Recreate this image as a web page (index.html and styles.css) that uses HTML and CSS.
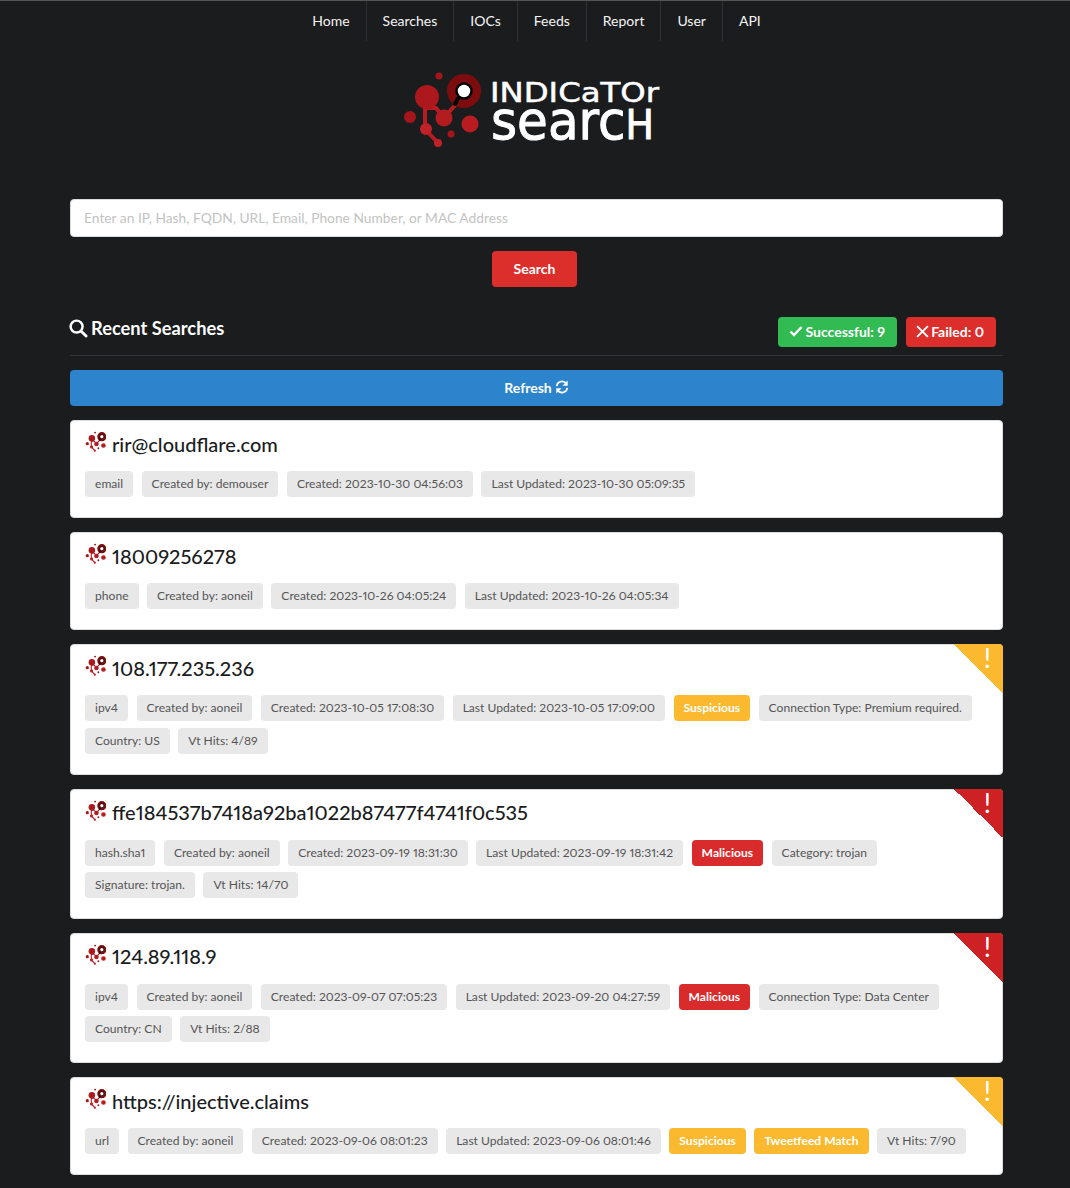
FILE: index.html
```html
<!DOCTYPE html>
<html lang="en">
<head>
<meta charset="utf-8">
<title>Indicator Search</title>
<link rel="stylesheet" href="styles.css">
</head>
<body>
<svg class="defs" width="0" height="0" aria-hidden="true">
  <defs>
    <g id="mark">
      <g fill="none" stroke="#b81c20" stroke-linecap="round" stroke-linejoin="round">
        <path d="M425 100V129L438 143" stroke-width="4"/>
        <path d="M427 108H436L444 118L456 104" stroke-width="4"/>
      </g>
      <circle cx="439" cy="76" r="3.5" fill="#a5161b"/>
      <circle cx="427" cy="97" r="12" fill="#ad181c"/>
      <circle cx="410" cy="117" r="6" fill="#a5161b"/>
      <circle cx="444" cy="118" r="8.500" fill="#b41c20"/>
      <circle cx="470" cy="124" r="8.500" fill="#b81c20"/>
      <circle cx="426" cy="129" r="6" fill="#c0222a"/>
      <circle cx="438" cy="143" r="4" fill="#c0222a"/>
      <circle cx="451" cy="134" r="3.500" fill="#a5161b"/>
      <circle cx="464" cy="91" r="17" fill="#7d0c0e"/>
      <path d="M459 97L455 104" stroke="#000" stroke-width="4" stroke-linecap="round"/>
      <circle cx="464" cy="91" r="7.500" fill="#fff" stroke="#000" stroke-width="2.500"/>
    </g>
  </defs>
</svg>

<nav class="nav">
  <a class="nav-item" href="#">Home</a>
  <a class="nav-item" href="#">Searches</a>
  <a class="nav-item" href="#">IOCs</a>
  <a class="nav-item" href="#">Feeds</a>
  <a class="nav-item" href="#">Report</a>
  <a class="nav-item" href="#">User</a>
  <a class="nav-item" href="#">API</a>
</nav>

<header class="brand">
  <svg class="logo" viewBox="404 68 265 84" width="265" height="84" role="img" aria-label="Indicator Search">
    <use href="#mark"/>
    <text class="logo-top" x="490" y="102" textLength="169" lengthAdjust="spacingAndGlyphs">INDICaTOr</text>
    <text class="logo-bottom" x="491" y="139" textLength="163" lengthAdjust="spacingAndGlyphs">searc<tspan class="logo-cap">H</tspan></text>
  </svg>
</header>

<main class="container">
  <form class="search">
    <input class="search-input" type="text" placeholder="Enter an IP, Hash, FQDN, URL, Email, Phone Number, or MAC Address">
    <button class="btn btn-search" type="button">Search</button>
  </form>

  <section class="recent-head">
    <h2 class="recent-title">
      <svg class="ico-search" viewBox="0 0 20 20" width="19" height="19"><circle cx="8" cy="8" r="6.300" fill="none" stroke="#fff" stroke-width="2.600"/><path d="M12.800 12.800L18 18" stroke="#fff" stroke-width="3" stroke-linecap="round"/></svg>
      Recent Searches
    </h2>
    <div class="counts">
      <span class="count count-ok"><svg viewBox="0 0 14 12" width="14" height="12"><path d="M1.500 6.500L5 10L12.500 2" fill="none" stroke="#fff" stroke-width="2.400"/></svg>Successful: 9</span>
      <span class="count count-bad"><svg viewBox="0 0 12 12" width="13" height="13"><path d="M1 1L11 11M11 1L1 11" fill="none" stroke="#fff" stroke-width="1.800"/></svg>Failed: 0</span>
    </div>
  </section>

  <button class="btn btn-refresh" type="button">Refresh
    <svg viewBox="0 0 16 16" width="14" height="14"><g fill="none" stroke="#fff" stroke-width="2"><path d="M2 7A6 6 0 0 1 13 4.500"/><path d="M14 9A6 6 0 0 1 3 11.500"/></g><path d="M14.500 0.500V6.500H8.500Z M1.500 15.500V9.500H7.500Z" fill="#fff"/></svg>
  </button>

  <div class="results">
    <article class="card">
      <h3 class="card-title"><svg class="mark" viewBox="402 70 77 78" width="21" height="21"><use href="#mark"/></svg>rir@cloudflare.com</h3>
      <div class="tags">
        <span class="tag">email</span><span class="tag">Created by: demouser</span><span class="tag">Created: 2023-10-30 04:56:03</span><span class="tag">Last Updated: 2023-10-30 05:09:35</span>
      </div>
    </article>

    <article class="card">
      <h3 class="card-title"><svg class="mark" viewBox="402 70 77 78" width="21" height="21"><use href="#mark"/></svg>18009256278</h3>
      <div class="tags">
        <span class="tag">phone</span><span class="tag">Created by: aoneil</span><span class="tag">Created: 2023-10-26 04:05:24</span><span class="tag">Last Updated: 2023-10-26 04:05:34</span>
      </div>
    </article>

    <article class="card">
      <span class="corner corner-warn">!</span>
      <h3 class="card-title"><svg class="mark" viewBox="402 70 77 78" width="21" height="21"><use href="#mark"/></svg>108.177.235.236</h3>
      <div class="tags">
        <span class="tag">ipv4</span><span class="tag">Created by: aoneil</span><span class="tag">Created: 2023-10-05 17:08:30</span><span class="tag">Last Updated: 2023-10-05 17:09:00</span><span class="tag tag-warn">Suspicious</span><span class="tag">Connection Type: Premium required.</span><span class="tag">Country: US</span><span class="tag">Vt Hits: 4/89</span>
      </div>
    </article>

    <article class="card">
      <span class="corner corner-bad">!</span>
      <h3 class="card-title"><svg class="mark" viewBox="402 70 77 78" width="21" height="21"><use href="#mark"/></svg>ffe184537b7418a92ba1022b87477f4741f0c535</h3>
      <div class="tags">
        <span class="tag">hash.sha1</span><span class="tag">Created by: aoneil</span><span class="tag">Created: 2023-09-19 18:31:30</span><span class="tag">Last Updated: 2023-09-19 18:31:42</span><span class="tag tag-bad">Malicious</span><span class="tag">Category: trojan</span><span class="tag">Signature: trojan.</span><span class="tag">Vt Hits: 14/70</span>
      </div>
    </article>

    <article class="card">
      <span class="corner corner-bad">!</span>
      <h3 class="card-title"><svg class="mark" viewBox="402 70 77 78" width="21" height="21"><use href="#mark"/></svg>124.89.118.9</h3>
      <div class="tags">
        <span class="tag">ipv4</span><span class="tag">Created by: aoneil</span><span class="tag">Created: 2023-09-07 07:05:23</span><span class="tag">Last Updated: 2023-09-20 04:27:59</span><span class="tag tag-bad">Malicious</span><span class="tag">Connection Type: Data Center</span><span class="tag">Country: CN</span><span class="tag">Vt Hits: 2/88</span>
      </div>
    </article>

    <article class="card">
      <span class="corner corner-warn">!</span>
      <h3 class="card-title"><svg class="mark" viewBox="402 70 77 78" width="21" height="21"><use href="#mark"/></svg>https://injective.claims</h3>
      <div class="tags">
        <span class="tag">url</span><span class="tag">Created by: aoneil</span><span class="tag">Created: 2023-09-06 08:01:23</span><span class="tag">Last Updated: 2023-09-06 08:01:46</span><span class="tag tag-warn">Suspicious</span><span class="tag tag-warn">Tweetfeed Match</span><span class="tag">Vt Hits: 7/90</span>
      </div>
    </article>
  </div>
</main>
</body>
</html>
```
FILE: styles.css
```css
* { box-sizing: border-box; }
html, body { margin: 0; padding: 0; }
body {
  background: #1b1c1e;
  border-top: 1px solid #555;
  font-family: Lato, "Open Sans", sans-serif;
  font-variant-numeric: proportional-nums;
  color: #f5f5f5;
  padding: 0 67px 12px 70px;
}
.defs { position: absolute; }

.nav { display: flex; justify-content: center; height: 40px; }
.nav-item {
  display: flex;
  align-items: center;
  padding: 0 16px 1px;
  color: #f5f5f5;
  font-size: 14px;
  text-decoration: none;
  border-left: 1px solid #303134;
}
.nav-item:first-child { border-left: 0; }

.brand { display: flex; justify-content: center; padding-top: 27px; height: 158px; }
.logo { display: block; }
.logo-top { font: 400 27px "DejaVu Sans", sans-serif; fill: #fff; stroke: #fff; stroke-width: 0.5px; }
.logo-bottom { font: 400 53px "DejaVu Sans", sans-serif; fill: #fff; stroke: #fff; stroke-width: 1px; stroke-linejoin: round; }
.logo-cap { font-size: 40px; }

.search { display: flex; flex-direction: column; align-items: center; gap: 14px; }
.search-input {
  width: 100%;
  height: 38px;
  padding: 0 13px 2px;
  border: 1px solid #dbdbdb;
  border-radius: 4px;
  background: #fff;
  font: 400 13.800px Lato, sans-serif;
  color: #333;
}
.search-input::placeholder { color: #c3c3c3; opacity: 1; }

.btn {
  display: flex;
  align-items: center;
  justify-content: center;
  gap: 3px;
  height: 36px;
  padding: 0 0 2px;
  border: 0;
  border-radius: 4px;
  color: #fff;
  font: 700 14px Lato, sans-serif;
}
.btn-search { width: 85px; background: #dc2e2b; margin-right: 4px; }
.btn-refresh { width: 100%; background: #2b84cc; margin-top: 14px; }

.recent-head {
  display: flex;
  justify-content: space-between;
  align-items: flex-start;
  height: 69px;
  padding-top: 30px;
  border-bottom: 1px solid #333437;
}
.recent-title {
  display: flex;
  align-items: center;
  gap: 3px;
  margin: -1px 0 0 -1px;
  font-size: 18.300px;
  font-weight: 700;
  line-height: 24px;
  color: #fff;
}
.counts { display: flex; gap: 9px; padding-right: 7px; }
.count {
  display: flex;
  align-items: center;
  gap: 2px;
  height: 30px;
  padding: 0 12px 2px 11px;
  border-radius: 4px;
  color: #fff;
  font-size: 14px;
  font-weight: 700;
}
.count-ok { background: #32ba53; }
.count-bad { background: #dc2e2b; padding: 0 12px 2px 10px; }

.results { display: flex; flex-direction: column; gap: 14px; margin-top: 14.100px; }
.card {
  position: relative;
  background: #fff;
  border: 1px solid #dcdcdc;
  border-radius: 4px;
  padding: 8px 14px 20px;
  color: #1b1c1e;
}
.card-title {
  display: flex;
  align-items: center;
  gap: 6px;
  margin: 0 0 13px;
  height: 29px;
  font-size: 20px;
  font-weight: 500;
}
.mark { margin-bottom: 4px; }
.tags { display: flex; flex-wrap: wrap; gap: 6.450px 8.500px; }
.tag {
  display: flex;
  align-items: center;
  height: 26px;
  padding: 0 10px 1px;
  border-radius: 4px;
  background: #e8e8e8;
  color: #555;
  font-size: 12.100px;
}
.tag-warn { background: #fbb92f; color: #fff; font-weight: 700; }
.tag-bad { background: #d92b2b; color: #fff; font-weight: 700; }

.corner {
  position: absolute;
  top: -1px;
  right: -1px;
  width: 49px;
  height: 49px;
  border-top-right-radius: 4px;
  color: #fff;
  font-size: 27px;
  line-height: 26px;
  text-align: right;
  padding: 1px 12px 0 0;
}
.corner-warn { background: linear-gradient(to top right, transparent 50%, #fbb92f 50%); }
.corner-bad { background: linear-gradient(to top right, transparent 50%, #cd2124 50%); }
```
